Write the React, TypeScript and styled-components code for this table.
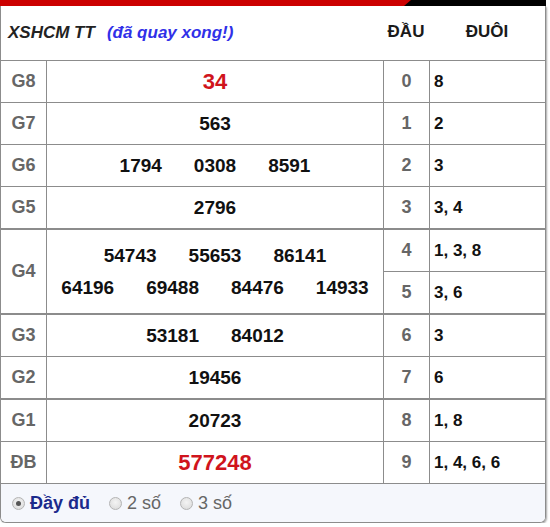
import React from 'react';
import styled, { createGlobalStyle } from 'styled-components';

const GlobalStyle = createGlobalStyle`
  html, body { margin: 0; padding: 0; background: #fff; }
  body { font-family: "Liberation Sans", Arial, sans-serif; }
`;

const Wrapper = styled.div`
  width: 546px;
`;

const TopBar = styled.div`
  height: 6px;
  background: #000;
  position: relative;
  &::before {
    content: '';
    position: absolute;
    left: 0;
    top: 0;
    bottom: 0;
    width: 411px;
    background: #cc0000;
    clip-path: polygon(0 0, 100% 0, calc(100% - 7px) 100%, 0 100%);
  }
`;

const Panel = styled.div`
  border: 1px solid #8c8c8c;
  border-top: none;
  border-radius: 0 0 6px 6px;
  box-shadow: 1px 1px 2px rgba(0, 0, 0, 0.35);
  overflow: hidden;
`;

const Header = styled.div`
  height: 54px;
  display: grid;
  grid-template-columns: 382px 46px 1fr;
  align-items: center;
  background: #fff;
`;

const Title = styled.div`
  padding-left: 7px;
  font-size: 17px;
  font-weight: bold;
  font-style: italic;
  color: #222;
  display: flex;
  gap: 12px;
`;

const Status = styled.span`
  color: #3030e8;
`;

const HeadCell = styled.div`
  text-align: center;
  font-size: 17px;
  font-weight: bold;
  color: #1a1a1a;
  padding-bottom: 2px;
`;

const Grid = styled.div<{ $rows: string }>`
  display: grid;
  grid-template-columns: 45px 336px 45px 1fr;
  grid-template-rows: ${(p) => p.$rows};
  gap: 1px;
  background: #8c8c8c;
  border-top: 1px solid #8c8c8c;
  border-bottom: 1px solid #8c8c8c;
`;

const Cell = styled.div<{ $span?: number; $thick?: boolean }>`
  background: #fff;
  display: flex;
  align-items: center;
  box-sizing: border-box;
  ${(p) => (p.$span ? `grid-row: span ${p.$span};` : '')}
  ${(p) => (p.$thick ? 'border-top: 1px solid #8c8c8c;' : '')}
`;

const Label = styled(Cell)`
  justify-content: center;
  color: #666;
  font-weight: bold;
  font-size: 18px;
`;

const Prize = styled(Cell)`
  flex-direction: column;
  justify-content: center;
  gap: 10px;
`;

const NumLine = styled.div`
  display: flex;
  justify-content: center;
  gap: 32px;
`;

const Num = styled.span<{ $red?: boolean }>`
  font-weight: bold;
  font-size: ${(p) => (p.$red ? '22px' : '19px')};
  color: ${(p) => (p.$red ? '#d0141c' : '#111')};
`;

const Head = styled(Cell)`
  justify-content: center;
  color: #666;
  font-weight: bold;
  font-size: 18px;
`;

const Tail = styled(Cell)`
  padding-left: 4px;
  color: #111;
  font-weight: bold;
  font-size: 17px;
`;

const Footer = styled.div`
  height: 38px;
  background: #f5f7fc;
  display: flex;
  align-items: center;
  padding-left: 11px;
`;

const Option = styled.label`
  display: flex;
  align-items: center;
  gap: 5px;
  margin-right: 19px;
  font-size: 18px;
  color: #666;
`;

const OptionText = styled.span<{ $active?: boolean }>`
  color: ${(p) => (p.$active ? '#1b2a8c' : '#666')};
  font-weight: ${(p) => (p.$active ? 'bold' : 'normal')};
`;

const Radio = styled.span<{ $checked?: boolean }>`
  width: 11px;
  height: 11px;
  border-radius: 50%;
  border: 1px solid #b4b4b4;
  background: radial-gradient(circle at 50% 40%, #f4f4f4, #d8d8d8);
  display: flex;
  align-items: center;
  justify-content: center;
  &::after {
    content: '';
    width: 5px;
    height: 5px;
    border-radius: 50%;
    background: ${(p) => (p.$checked ? '#555' : 'transparent')};
  }
`;

type PrizeRow = { label: string; lines: string[][]; red?: boolean; thick?: boolean };

const prizes: PrizeRow[] = [
  { label: 'G8', lines: [['34']], red: true },
  { label: 'G7', lines: [['563']] },
  { label: 'G6', lines: [['1794', '0308', '8591']] },
  { label: 'G5', lines: [['2796']] },
  { label: 'G4', lines: [['54743', '55653', '86141'], ['64196', '69488', '84476', '14933']], thick: true },
  { label: 'G3', lines: [['53181', '84012']], thick: true },
  { label: 'G2', lines: [['19456']] },
  { label: 'G1', lines: [['20723']], thick: true },
  { label: 'ĐB', lines: [['577248']], red: true },
];

const tails = ['8', '2', '3', '3, 4', '1, 3, 8', '3, 6', '3', '6', '1, 8', '1, 4, 6, 6'];

const rowHeights = [41, 41, 41, 41, 42, 41, 42, 41, 42, 41];

export default function App() {
  const cells: React.ReactNode[] = [];
  let row = 0;
  prizes.forEach((p) => {
    const span = p.lines.length;
    cells.push(
      <Label key={`l${p.label}`} $span={span} $thick={p.thick}>
        {p.label}
      </Label>
    );
    cells.push(
      <Prize key={`p${p.label}`} $span={span} $thick={p.thick}>
        {p.lines.map((line, i) => (
          <NumLine key={i}>
            {line.map((n) => (
              <Num key={n} $red={p.red}>
                {n}
              </Num>
            ))}
          </NumLine>
        ))}
      </Prize>
    );
    for (let k = 0; k < span; k++) {
      const r = row + k;
      const thick = k === 0 && p.thick;
      cells.push(
        <Head key={`h${r}`} style={{ gridColumn: 3, gridRow: r + 1 }} $thick={thick}>
          {r}
        </Head>
      );
      cells.push(
        <Tail key={`t${r}`} style={{ gridColumn: 4, gridRow: r + 1 }} $thick={thick}>
          {tails[r]}
        </Tail>
      );
    }
    row += span;
  });

  return (
    <>
      <GlobalStyle />
      <Wrapper>
        <TopBar />
        <Panel>
          <Header>
            <Title>
              <span>XSHCM TT</span>
              <Status>(đã quay xong!)</Status>
            </Title>
            <HeadCell>ĐẦU</HeadCell>
            <HeadCell>ĐUÔI</HeadCell>
          </Header>
          <Grid $rows={rowHeights.map((h) => `${h}px`).join(' ')}>{cells}</Grid>
          <Footer>
            <Option>
              <Radio $checked />
              <OptionText $active>Đầy đủ</OptionText>
            </Option>
            <Option>
              <Radio />
              <OptionText>2 số</OptionText>
            </Option>
            <Option>
              <Radio />
              <OptionText>3 số</OptionText>
            </Option>
          </Footer>
        </Panel>
      </Wrapper>
    </>
  );
}
